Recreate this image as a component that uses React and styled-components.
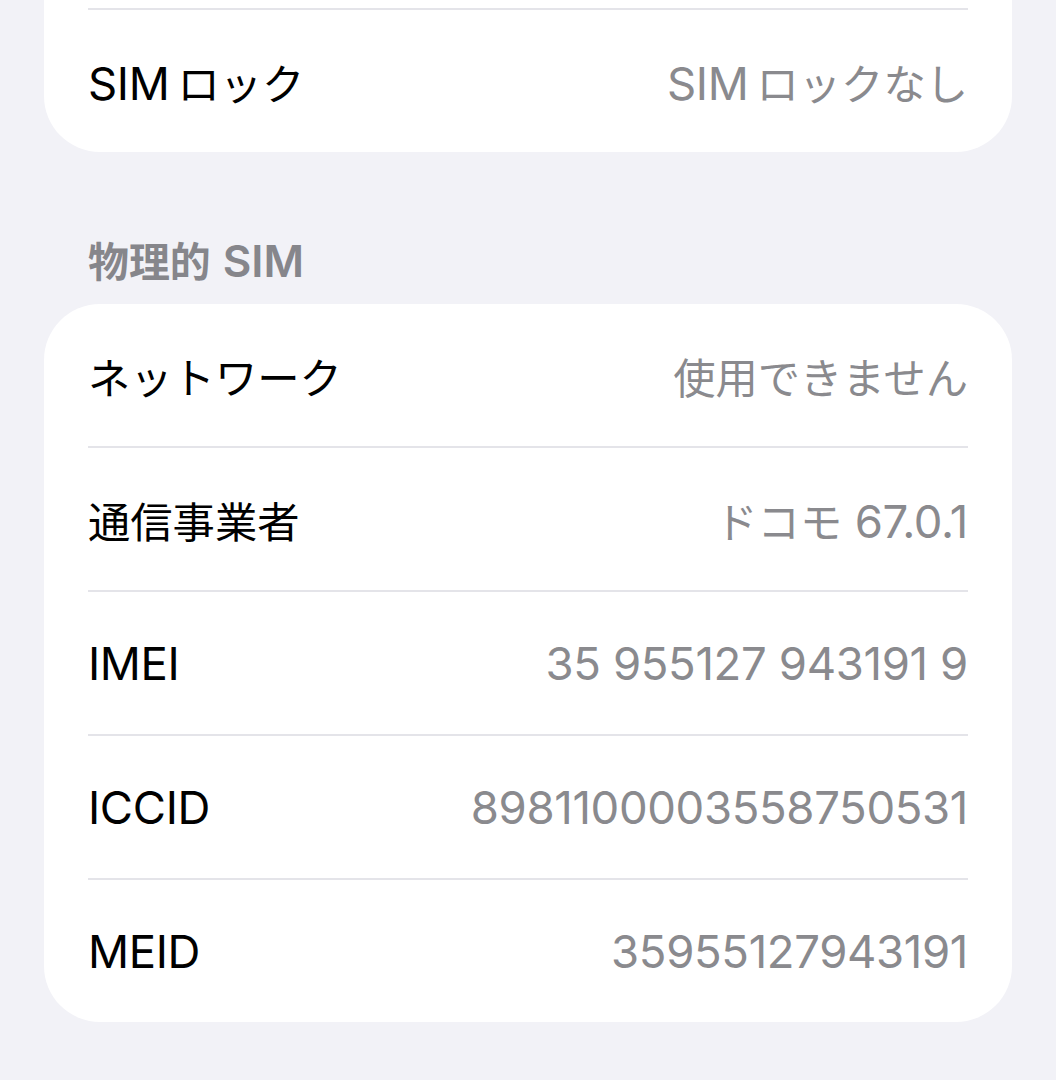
import React from "react";
import styled, { createGlobalStyle } from "styled-components";

const GlobalStyle = createGlobalStyle`
  html, body {
    margin: 0;
    padding: 0;
    background: #f2f2f7;
  }
  body {
    font-family: Inter, "Noto Sans CJK JP", sans-serif;
    -webkit-font-smoothing: antialiased;
  }
`;

const Page = styled.div`
  width: 1056px;
  height: 1080px;
  overflow: hidden;
  background: #f2f2f7;
  padding: 0 44px;
  box-sizing: border-box;
`;

const Card = styled.div`
  background: #ffffff;
  border-radius: ${({ $cutTop }) => ($cutTop ? "0 0 56px 56px" : "56px")};
  padding-top: ${({ $cutTop }) => ($cutTop ? "8px" : "0")};
  display: flex;
  flex-direction: column;
`;

const Row = styled.div`
  height: 142px;
  display: flex;
  align-items: center;
  justify-content: space-between;
  padding: 0 44px;
  font-size: 45.5px;
  letter-spacing: -0.35px;
`;

const Label = styled.span`
  color: #000000;
`;

const Value = styled.span`
  color: #8a8a8e;
`;

const Jp = styled.span`
  font-family: "Noto Sans CJK JP", sans-serif;
  font-size: 0.93em;
  letter-spacing: 0;
  margin-left: ${({ $afterLatin }) => ($afterLatin ? "8px" : "0")};
`;

const Separator = styled.div`
  height: 2px;
  margin: 0 44px;
  background: #e4e4e9;
`;

const SectionHeader = styled.div`
  padding: 80px 44px 0;
  height: 56px;
  line-height: 56px;
  margin-bottom: 16px;
  font-size: 44px;
  font-weight: 600;
  color: #86868b;
`;

const HeaderLatin = styled.span`
  margin-left: 12px;
`;

const CJK = /([\u3000-\u30ff\u3400-\u9fff\uff00-\uffef]+)/;

function MixedText({ children }) {
  const parts = children.split(CJK).filter(Boolean);
  return parts.map((part, i) =>
    CJK.test(part) ? (
      <Jp key={i} $afterLatin={i > 0 && !/\s$/.test(parts[i - 1])}>
        {part}
      </Jp>
    ) : (
      <React.Fragment key={i}>{part}</React.Fragment>
    )
  );
}

const rows = [
  ["ネットワーク", "使用できません"],
  ["通信事業者", "ドコモ 67.0.1"],
  ["IMEI", "35 955127 943191 9"],
  ["ICCID", "8981100003558750531"],
  ["MEID", "35955127943191"],
];

export default function App() {
  return (
    <>
      <GlobalStyle />
      <Page>
        <Card $cutTop>
          <Separator />
          <Row>
            <Label>
              <MixedText>SIMロック</MixedText>
            </Label>
            <Value>
              <MixedText>SIMロックなし</MixedText>
            </Value>
          </Row>
        </Card>
        <SectionHeader>
          <Jp>物理的</Jp>
          <HeaderLatin>SIM</HeaderLatin>
        </SectionHeader>
        <Card>
          {rows.map(([label, value], i) => (
            <React.Fragment key={label}>
              {i > 0 && <Separator />}
              <Row>
                <Label>
                  <MixedText>{label}</MixedText>
                </Label>
                <Value>
                  <MixedText>{value}</MixedText>
                </Value>
              </Row>
            </React.Fragment>
          ))}
        </Card>
      </Page>
    </>
  );
}
